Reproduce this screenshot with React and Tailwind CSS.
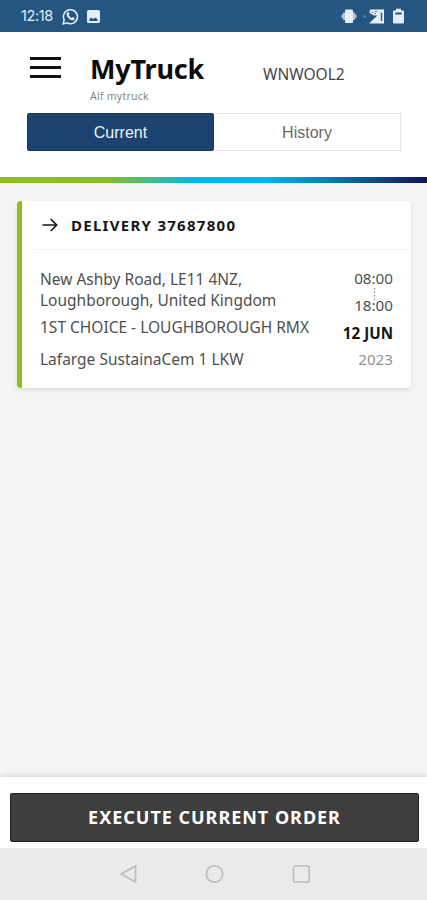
function StatusBar() {
  return (
    <div className="flex h-8 shrink-0 items-center bg-[#255682] pl-[21px] pr-[23px] text-[#e6eff8]">
      <span className="w-[33px] whitespace-nowrap font-['Inter','Liberation_Sans',sans-serif] text-[14.5px] leading-8 tracking-[-0.4px]">12:18</span>
      <svg className="ml-[8px] shrink-0" width="17" height="17" viewBox="0 0 17 17" fill="none" stroke="currentColor">
        <path d="M1 16l1.200-4.100A7 7 0 1 1 5.100 14.900z" strokeWidth="1.500" strokeLinejoin="round" />
        <path d="M5.400 4.300l1.200-.2.9 2-.8 1c.7 1.400 1.700 2.300 3.100 2.900l.9-1 2 1c0 1.500-1 2.300-2.100 2.300C8 12.200 4.800 9 4.600 6.200c0-.8.3-1.500.8-1.900z" fill="currentColor" stroke="none" />
      </svg>
      <svg className="ml-[8px] shrink-0" width="13" height="13" viewBox="0 0 13 13">
        <rect width="13" height="13" rx="1.500" fill="currentColor" />
        <path d="M2.500 11v-2l1.700-1.500L6 9l2.200-1.500L10.500 9v2z" fill="#255682" />
      </svg>
      <svg className="ml-auto shrink-0" width="16" height="16" viewBox="0 0 16 16" fill="currentColor">
        <rect x="4" y="1.500" width="8" height="13.500" rx="1" />
        <path d="M2 4.500h2.500v7.500H2zM11.500 4.500H14v7.500h-2.500zM0.500 6.500h1.500v3.500H.5zM14 6.500h1.500v3.500H14z" opacity=".75" />
      </svg>
      <svg className="ml-[6px] shrink-0" width="23" height="16" viewBox="0 0 23 16">
        <circle cx="2" cy="8.500" r="1.200" fill="#6289b2" />
        <path d="M6 15.500L18 4l3-3v14.500z" fill="currentColor" />
        <path d="M17.800 4.500h1.400v8.500h-1.400z" fill="#255682" />
        <path d="M7 1.500h14v3h-3l-3 3h-4L6.500 5z" fill="currentColor" />
        <path d="M8.500 4.300h2M12 3.500h2M11.500 5.500h1.500" stroke="#255682" strokeWidth=".8" />
      </svg>
      <svg className="ml-[7px] shrink-0" width="11" height="16" viewBox="0 0 11 16">
        <path d="M3 .8h5v1.700h2a1 1 0 0 1 1 1v11a1 1 0 0 1-1 1H1a1 1 0 0 1-1-1v-11a1 1 0 0 1 1-1h2z" fill="currentColor" />
        <rect x="2.300" y="4.500" width="6.400" height="2" fill="#255682" />
      </svg>
    </div>
  );
}

function Header() {
  return (
    <header className="flex h-[145px] shrink-0 flex-col bg-white">
      <div className="flex h-[81px] pl-[30px]">
        <button className="mt-[25px] flex h-[21px] w-[31px] flex-col justify-between" aria-label="Menu">
          <span className="h-[3px] w-full bg-[#111]" />
          <span className="h-[3px] w-full bg-[#111]" />
          <span className="h-[3px] w-full bg-[#111]" />
        </button>
        <div className="ml-[29px] w-[173px] whitespace-nowrap pt-[19px]">
          <h1 className="text-[27px] font-bold leading-[36px] tracking-[-0.2px] text-[#0b0b0b]">MyTruck</h1>
          <p className="mt-[2px] text-[10.5px] leading-[14px] tracking-[0.25px] text-[#858585]">Alf mytruck</p>
        </div>
        <span className="mt-[31px] whitespace-nowrap text-[15.5px] leading-[22px] text-[#444]">WNWOOL2</span>
      </div>
      <div className="ml-[27px] flex h-[38px] w-[374px] font-['Liberation_Sans',Arial,sans-serif] text-[16px]">
        <button className="flex w-[187px] items-center justify-center rounded-[2px] border border-[#123a6c] bg-[#1c426f] pt-[2px] text-[#edf3fa]">Current</button>
        <button className="flex w-[187px] items-center justify-center border border-l-0 border-[#e5e5e5] pt-[2px] text-[#6a6a6a]">History</button>
      </div>
    </header>
  );
}

function DeliveryCard() {
  return (
    <article className="ml-[17px] mr-4 mt-[18px] h-[187px] rounded-[4px] border-l-[5px] border-[#8fbe1f] bg-white shadow-[0_2px_4px_rgba(0,0,0,0.1)]">
      <div className="ml-[12px] flex h-[49px] items-center border-b border-[#f3f3f3] pl-[8px]">
        <svg width="16" height="14" viewBox="0 0 16 14" fill="none" stroke="#171717" strokeWidth="1.700">
          <path d="M0.500 7h14M8.700 1l6 6-6 6" />
        </svg>
        <h2 className="ml-[13px] whitespace-nowrap text-[15px] font-bold leading-[22px] tracking-[1.28px] text-[#151515]">DELIVERY 37687800</h2>
      </div>
      <div className="flex justify-between pl-[18px] pr-[18px] text-[#505050]">
        <div className="whitespace-nowrap pt-[19px] text-[15.5px] leading-[22px]">
          <p className="leading-[21px]">New Ashby Road, LE11 4NZ,<br />Loughborough, United Kingdom</p>
          <p className="mt-[5px]">1ST CHOICE - LOUGHBOROUGH RMX</p>
          <p className="mt-[10px]">Lafarge SustainaCem 1 LKW</p>
        </div>
        <div className="flex flex-col items-end whitespace-nowrap pt-[15px] text-[15.2px] leading-[27px]">
          <span>08:00</span>
          <div className="relative">
            <svg className="absolute right-[17px] top-[-5px]" width="3" height="14" viewBox="0 0 3 14">
              <path d="M1.500 1v13" stroke="#888" strokeWidth="1.200" strokeDasharray="1.500 2" />
            </svg>
            18:00
          </div>
          <strong className="mt-px text-[#151515]">12 JUN</strong>
          <span className="-mt-px text-[#929292]">2023</span>
        </div>
      </div>
    </article>
  );
}

function NavigationBar() {
  return (
    <nav className="flex h-[52px] shrink-0 items-center justify-center bg-[#eaeaea]">
      <svg width="192" height="20" viewBox="0 0 192 20" fill="none" stroke="#bdbdbd" strokeWidth="1.700" strokeLinejoin="round">
        <path d="M17.500 2v16L3 10z" />
        <circle cx="96.500" cy="10" r="8.200" />
        <rect x="175.500" y="2" width="15.700" height="16" rx="1.800" />
      </svg>
    </nav>
  );
}

export default function App() {
  return (
    <div className="flex h-[900px] w-[427px] flex-col overflow-hidden bg-[#f4f4f4] font-['Noto_Sans',sans-serif]">
      <StatusBar />
      <Header />
      <div className="h-[6px] shrink-0 bg-[linear-gradient(90deg,#92bf1f_0%,#86bd27_25%,#00b8ec_46%,#00b5f0_62%,#087aa8_78%,#11145a_100%)]" />
      <main className="flex-1">
        <DeliveryCard />
      </main>
      <footer className="h-[71px] shrink-0 bg-white pl-[10px] pr-[8px] pt-4 shadow-[0_-2px_5px_rgba(0,0,0,0.1)]">
        <button className="flex h-[49px] w-full items-center justify-center rounded-[2px] border border-[#222] bg-[#3e3e3e] text-[18px] font-bold tracking-[0.98px] text-white">EXECUTE CURRENT ORDER</button>
      </footer>
      <NavigationBar />
    </div>
  );
}
